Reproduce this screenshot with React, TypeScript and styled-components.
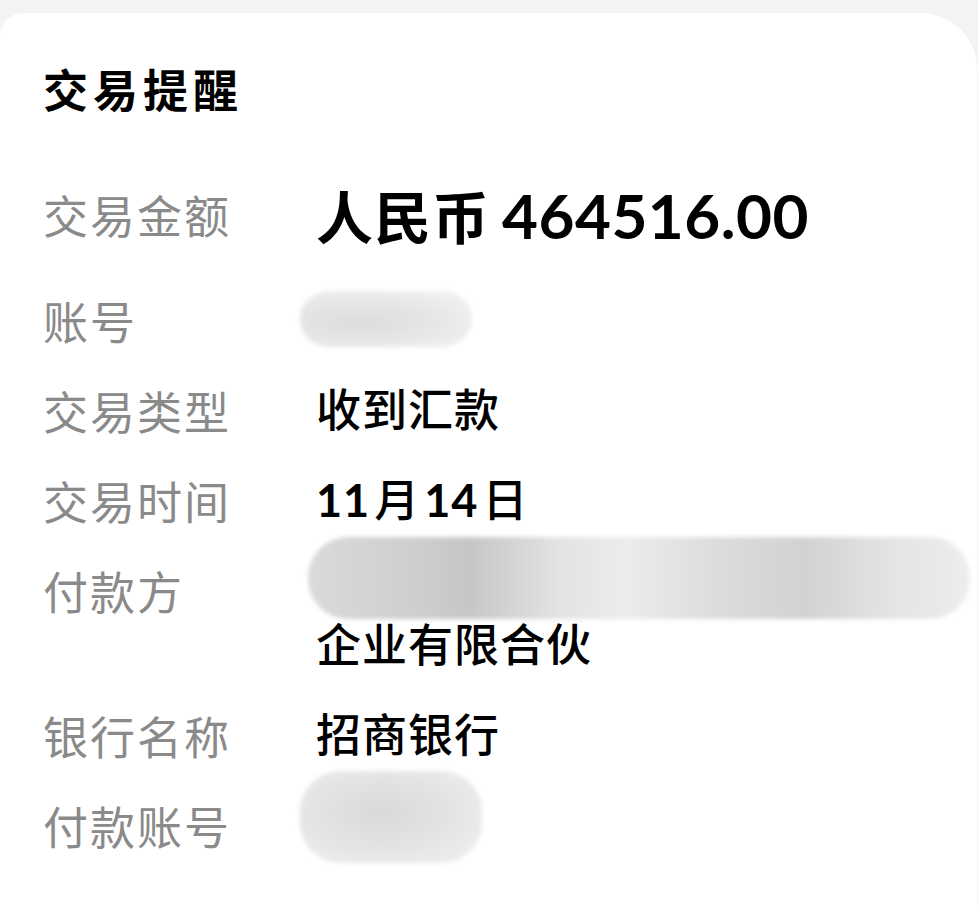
import React from "react";
import styled, { createGlobalStyle } from "styled-components";

const GlobalStyle = createGlobalStyle`
	html, body {
		margin: 0;
		padding: 0;
		background: #f3f3f3;
	}
	body {
		font-family: Lato, "Noto Sans CJK SC", "Noto Sans", sans-serif;
	}
`;

const Page = styled.div`
	min-height: 907px;
	padding-top: 13px;
	box-sizing: border-box;
	overflow: hidden;
`;

const Card = styled.div`
	width: 977px;
	min-height: 894px;
	background: #ffffff;
	border-radius: 24px 56px 0 0 / 22px 56px 0 0;
	padding: 48px 0 0 43px;
	box-sizing: border-box;
`;

const Title = styled.h1`
	margin: 0 0 70px;
	font-family: "Noto Sans CJK SC", sans-serif;
	font-size: 45px;
	line-height: 56px;
	font-weight: 700;
	letter-spacing: 5px;
	color: #000;
`;

const List = styled.div`
	display: flex;
	flex-direction: column;
	gap: 35px;
`;

const Row = styled.div<{ $extra?: number }>`
	display: grid;
	grid-template-columns: 273px 1fr;
	align-items: start;
	padding-bottom: ${(p) => p.$extra || 0}px;
`;

const Label = styled.div`
	font-family: "Noto Sans CJK SC", sans-serif;
	font-size: 45px;
	line-height: 55px;
	letter-spacing: 2px;
	color: #8a8a8a;
`;

const Value = styled.div`
	font-size: 45px;
	line-height: 55px;
	font-weight: 500;
	color: #000;
	letter-spacing: 1px;
`;

const Line = styled.div`
	position: relative;
	height: 55px;
`;

const Amount = styled.div`
	display: flex;
	align-items: baseline;
	gap: 12px;
	line-height: 55px;
	color: #000;
	font-weight: 700;
`;

const Currency = styled.span`
	font-family: "Noto Sans CJK SC", sans-serif;
	font-size: 57px;
	letter-spacing: 1px;
`;

const Figure = styled.span`
	font-family: Lato, sans-serif;
	font-size: 62px;
	font-weight: 700;
	letter-spacing: 0.5px;
`;

const Num = styled.span`
	font-family: Lato, sans-serif;
	font-weight: 700;
	margin-right: 4px;
`;

const Gap = styled.span`
	margin-right: 4px;
`;

/* blurred redaction smudges drawn over the hidden values */
const Smudge = styled.div<{ $shade: string }>`
	position: absolute;
	border-radius: 40px;
	background: ${(p) => p.$shade};
	filter: blur(2px);
`;

const accountShade =
	"radial-gradient(ellipse at 35% 55%, #dcdcdc 0%, #e6e6e6 45%, rgba(240,240,240,0.9) 80%), #ececec";
const payerShade =
	"linear-gradient(90deg, #dadada 0%, #cdcdcd 18%, #c6c6c6 24%, #e3e3e3 38%, #ececec 48%, #dcdcdc 62%, #d2d2d2 75%, #e4e4e4 88%, #ededed 100%)";
const payAccShade =
	"radial-gradient(ellipse at 45% 45%, #d9d9d9 0%, #e4e4e4 50%, #efefef 90%)";

export default function App() {
	return (
		<>
			<GlobalStyle />
			<Page>
				<Card>
					<Title>交易提醒</Title>
					<List>
						<Row $extra={15}>
							<Label>交易金额</Label>
							<Amount>
								<Currency>人民币</Currency>
								<Figure>464516.00</Figure>
							</Amount>
						</Row>
						<Row>
							<Label>账号</Label>
							<Line>
								<Smudge
									$shade={accountShade}
									style={{ left: -16, top: -2, width: 172, height: 56 }}
								/>
							</Line>
						</Row>
						<Row>
							<Label>交易类型</Label>
							<Value>收到汇款</Value>
						</Row>
						<Row>
							<Label>交易时间</Label>
							<Value>
								<Num>11</Num>月<Gap />
								<Num>14</Num>日
							</Value>
						</Row>
						<Row>
							<Label>付款方</Label>
							<Value>
								<Line>
									<Smudge
										$shade={payerShade}
										style={{ left: -8, top: -26, width: 662, height: 82 }}
									/>
								</Line>
								企业有限合伙
							</Value>
						</Row>
						<Row>
							<Label>银行名称</Label>
							<Value>招商银行</Value>
						</Row>
						<Row>
							<Label>付款账号</Label>
							<Line>
								<Smudge
									$shade={payAccShade}
									style={{ left: -16, top: -27, width: 182, height: 92 }}
								/>
							</Line>
						</Row>
					</List>
				</Card>
			</Page>
		</>
	);
}
